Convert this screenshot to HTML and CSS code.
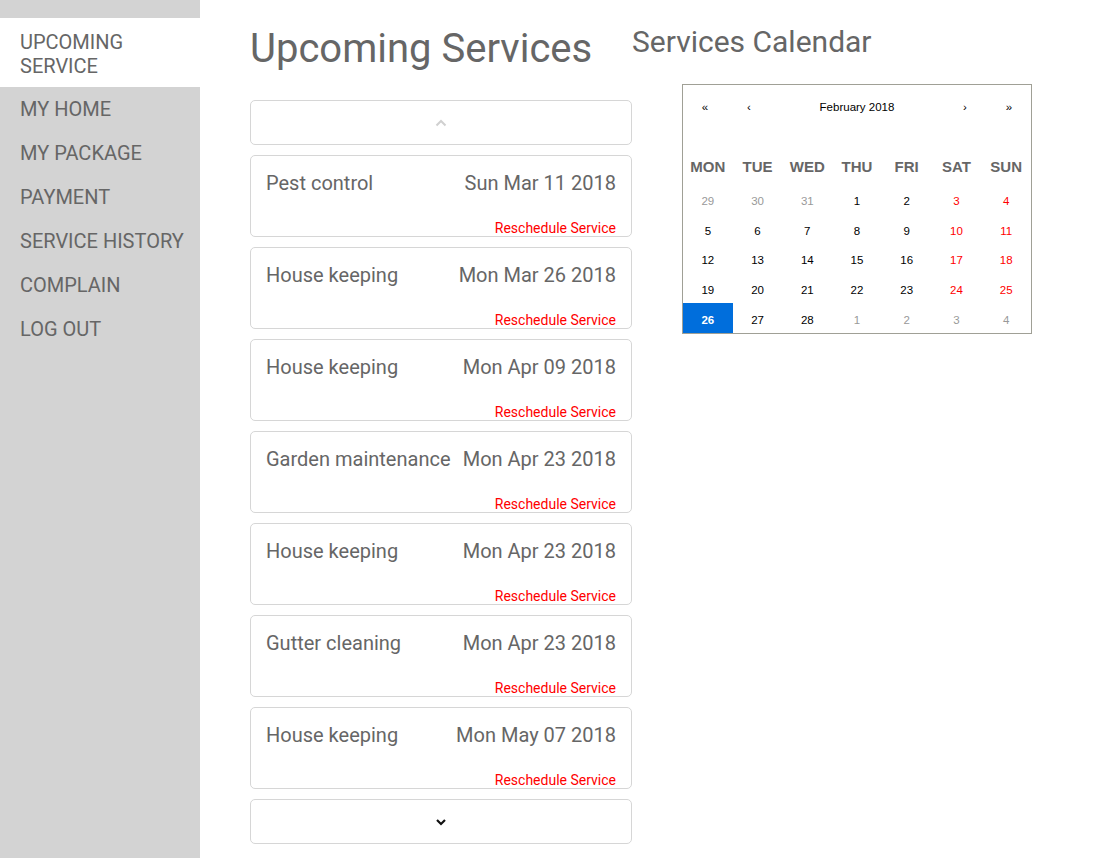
FILE: index.html
```html
<!DOCTYPE html>
<html>
<head>
<meta charset="utf-8">
<link rel="stylesheet" href="styles.css">
</head>
<body>
<div class="app">
  <nav class="sidebar">
    <a class="nav-item active">UPCOMING SERVICE</a>
    <a class="nav-item">MY HOME</a>
    <a class="nav-item">MY PACKAGE</a>
    <a class="nav-item">PAYMENT</a>
    <a class="nav-item">SERVICE HISTORY</a>
    <a class="nav-item">COMPLAIN</a>
    <a class="nav-item">LOG OUT</a>
  </nav>
  <main class="main">
    <section class="services">
      <h1 class="title">Upcoming Services</h1>
      <div class="list">
        <button class="pager"><svg width="12" height="8" viewBox="0 0 12 8"><path d="M1.5 6.5 L6 2 L10.5 6.5" fill="none" stroke="#d0d0d0" stroke-width="2"/></svg></button>
        <div class="card"><div class="card-row"><span>Pest control</span><span>Sun Mar 11 2018</span></div><div class="resched">Reschedule Service</div></div>
        <div class="card"><div class="card-row"><span>House keeping</span><span>Mon Mar 26 2018</span></div><div class="resched">Reschedule Service</div></div>
        <div class="card"><div class="card-row"><span>House keeping</span><span>Mon Apr 09 2018</span></div><div class="resched">Reschedule Service</div></div>
        <div class="card"><div class="card-row"><span>Garden maintenance</span><span>Mon Apr 23 2018</span></div><div class="resched">Reschedule Service</div></div>
        <div class="card"><div class="card-row"><span>House keeping</span><span>Mon Apr 23 2018</span></div><div class="resched">Reschedule Service</div></div>
        <div class="card"><div class="card-row"><span>Gutter cleaning</span><span>Mon Apr 23 2018</span></div><div class="resched">Reschedule Service</div></div>
        <div class="card"><div class="card-row"><span>House keeping</span><span>Mon May 07 2018</span></div><div class="resched">Reschedule Service</div></div>
        <button class="pager"><svg width="12" height="8" viewBox="0 0 12 8"><path d="M2 2 L6 6 L10 2" fill="none" stroke="#111" stroke-width="2.2"/></svg></button>
      </div>
    </section>
    <section class="cal-section">
      <h2 class="cal-title">Services Calendar</h2>
      <div class="calendar">
        <div class="cal-nav">
          <span class="nav-btn">«</span>
          <span class="nav-btn">‹</span>
          <span class="nav-label">February 2018</span>
          <span class="nav-btn">›</span>
          <span class="nav-btn">»</span>
        </div>
        <div class="weekdays">
          <span>MON</span><span>TUE</span><span>WED</span><span>THU</span><span>FRI</span><span>SAT</span><span>SUN</span>
        </div>
        <div class="days">
          <span class="other">29</span><span class="other">30</span><span class="other">31</span><span>1</span><span>2</span><span class="wknd">3</span><span class="wknd">4</span>
          <span>5</span><span>6</span><span>7</span><span>8</span><span>9</span><span class="wknd">10</span><span class="wknd">11</span>
          <span>12</span><span>13</span><span>14</span><span>15</span><span>16</span><span class="wknd">17</span><span class="wknd">18</span>
          <span>19</span><span>20</span><span>21</span><span>22</span><span>23</span><span class="wknd">24</span><span class="wknd">25</span>
          <span class="today">26</span><span>27</span><span>28</span><span class="other">1</span><span class="other">2</span><span class="other">3</span><span class="other">4</span>
        </div>
      </div>
    </section>
  </main>
</div>
</body>
</html>
```

FILE: styles.css
```css
html, body {
  margin: 0;
  padding: 0;
  background: #fff;
  font-family: Roboto, "Liberation Sans", sans-serif;
  color: #666;
}
.app {
  display: flex;
  min-height: 858px;
}
.sidebar {
  width: 200px;
  flex: none;
  background: #d3d3d3;
  padding-top: 18px;
  display: flex;
  flex-direction: column;
}
.nav-item {
  display: block;
  padding: 10px 0 10px 20px;
  font-size: 20px;
  line-height: 24px;
  color: #666;
  white-space: nowrap;
}
.nav-item.active {
  background: #fff;
  padding: 12px 60px 9px 20px;
  white-space: normal;
}
.main {
  display: flex;
  padding-left: 50px;
}
.services {
  width: 382px;
}
.title {
  margin: 0;
  padding-top: 26px;
  height: 100px;
  box-sizing: border-box;
  font-size: 40px;
  line-height: 46px;
  font-weight: 400;
  color: #666;
}
.list {
  display: flex;
  flex-direction: column;
  gap: 10px;
}
.pager {
  height: 45px;
  border: 1px solid #d6d6d6;
  border-radius: 5px;
  background: #fff;
  display: flex;
  align-items: center;
  justify-content: center;
  padding: 0;
}
.card {
  height: 82px;
  box-sizing: border-box;
  border: 1px solid #d6d6d6;
  border-radius: 5px;
  padding: 14px 15px 0;
}
.card-row {
  display: flex;
  justify-content: space-between;
  font-size: 20px;
  line-height: 26px;
  color: #666;
}
.resched {
  margin-top: 24px;
  text-align: right;
  font-size: 14px;
  line-height: 16px;
  color: #ff0000;
}
.cal-title {
  margin: 0;
  padding-top: 24px;
  height: 84px;
  box-sizing: border-box;
  font-size: 30px;
  line-height: 36px;
  font-weight: 400;
  color: #666;
}
.calendar {
  margin-left: 50px;
  width: 350px;
  box-sizing: border-box;
  border: 1px solid #a0a096;
  font-family: "Liberation Sans", Arial, sans-serif;
}
.cal-nav {
  display: flex;
  height: 44px;
  align-items: center;
  font-size: 11.5px;
  color: #000;
}
.nav-btn {
  width: 44px;
  text-align: center;
}
.nav-label {
  flex: 1;
  text-align: center;
}
.weekdays {
  margin-top: 17px;
  height: 39px;
  padding-top: 2px;
  box-sizing: border-box;
  display: grid;
  grid-template-columns: repeat(7, 1fr);
  align-items: center;
  text-align: center;
  font-size: 15px;
  font-weight: 700;
  color: #666;
}
.days {
  display: grid;
  grid-template-columns: repeat(7, 1fr);
  grid-template-rows: repeat(5, 1fr);
  height: 148px;
  font-size: 11.5px;
  color: #000;
}
.days span {
  display: flex;
  align-items: center;
  justify-content: center;
  padding-top: 3px;
}
.days .other { color: #999; }
.days .wknd { color: #ff0000; }
.days .today {
  background: #006edc;
  color: #fff;
  font-weight: 700;
}
```
